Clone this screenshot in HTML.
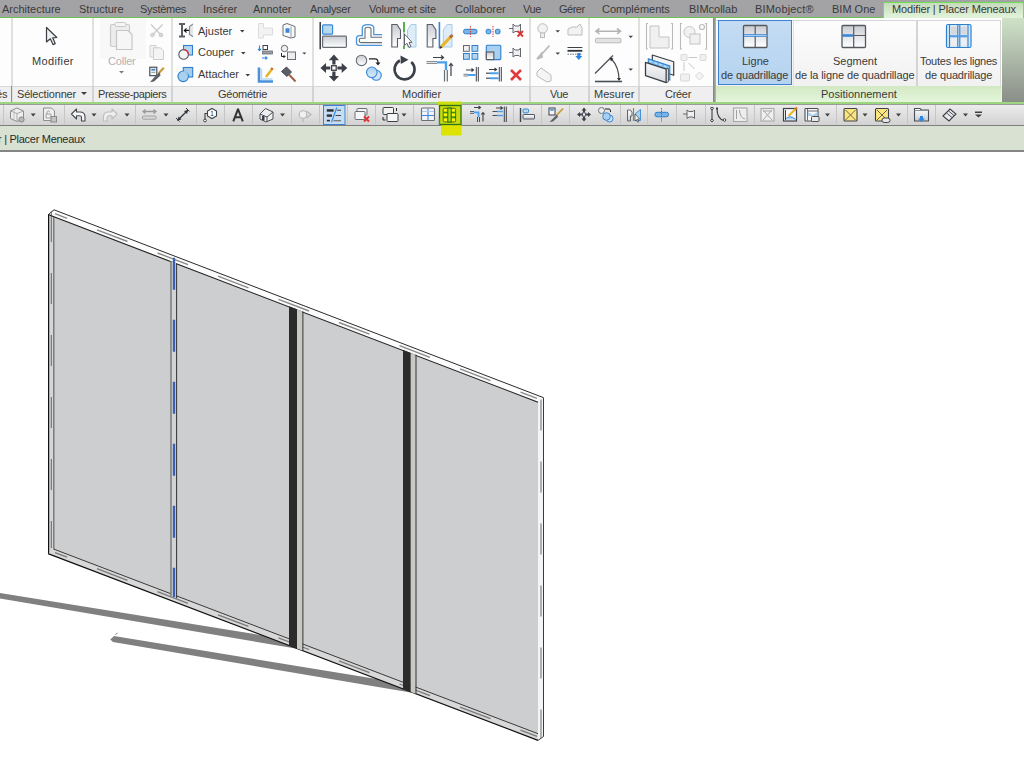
<!DOCTYPE html>
<html><head><meta charset="utf-8">
<style>
*{margin:0;padding:0;box-sizing:border-box}
html,body{width:1024px;height:770px;overflow:hidden;background:#fff;font-family:"Liberation Sans",sans-serif;font-size:11px;color:#333}
.a{position:absolute}
.t{position:absolute;white-space:nowrap;line-height:13px;font-size:11px;color:#3a3a3a}
.g{color:#b4b0b6}
#tabs{left:0;top:0;width:1024px;height:17px;background:#a3a3a6}
#gline{left:0;top:17px;width:1024px;height:1px;background:#6cc24a}
#ribbon{left:0;top:18px;width:1024px;height:68px;background:#fdfdfd}
#labels{left:0;top:86px;width:1024px;height:16px;background:#efefef;border-top:1px solid #d9d9d9}
#gline2{left:0;top:102px;width:1024px;height:2px;background:#9cd67e}
#qat{left:0;top:104px;width:1024px;height:22px;background:linear-gradient(#ececec,#d2d2d2);border-top:1px solid #9a9a9a;border-bottom:1px solid #7e7e7e}
#opts{left:0;top:126px;width:1024px;height:24px;background:#d9e2d2}
#optline{left:0;top:150px;width:1024px;height:2px;background:#858585}
.sep{position:absolute;top:18px;width:2px;height:84px;background:#dde3da}
.qs{position:absolute;top:105px;width:2px;height:19px;border-left:1px solid #c4c4c4;border-right:1px solid #f6f6f6}
</style></head><body>
<svg class="a" style="left:0;top:0" width="1024" height="770" viewBox="0 0 1024 770">
<polygon fill="#808080" points="0.0,592.9 300.0,641.4 300.0,649.2 0.0,598.6"/>
<polygon fill="#808080" points="114.0,636.1 415.0,685.2 415.0,693.2 113.0,642.0 110.3,639.6"/>
<line x1="115.5" y1="634.8" x2="117.5" y2="632.8" stroke="#555" stroke-width="0.8"/>
<polygon fill="#fcfcfc" points="54.0,210.0 543.6,397.7 538.0,401.6 48.0,214.0"/>
<path d="M48.5,214.5 L54,209.8 L543.6,397.7" fill="none" stroke="#2a2a2a" stroke-width="1"/>
<line x1="55.0" y1="213.7" x2="67.0" y2="218.3" stroke="#8a8a8a" stroke-width="1.4"/>
<line x1="97.0" y1="229.8" x2="127.5" y2="241.5" stroke="#8a8a8a" stroke-width="1.4"/>
<line x1="157.5" y1="253.0" x2="188.0" y2="264.7" stroke="#8a8a8a" stroke-width="1.4"/>
<line x1="218.0" y1="276.2" x2="248.5" y2="287.9" stroke="#8a8a8a" stroke-width="1.4"/>
<line x1="278.5" y1="299.4" x2="309.0" y2="311.0" stroke="#8a8a8a" stroke-width="1.4"/>
<line x1="339.0" y1="322.5" x2="369.5" y2="334.2" stroke="#8a8a8a" stroke-width="1.4"/>
<line x1="399.5" y1="345.7" x2="430.0" y2="357.4" stroke="#8a8a8a" stroke-width="1.4"/>
<line x1="460.0" y1="368.9" x2="490.5" y2="380.6" stroke="#8a8a8a" stroke-width="1.4"/>
<line x1="520.5" y1="392.1" x2="537.0" y2="398.4" stroke="#8a8a8a" stroke-width="1.4"/>
<polygon fill="#f4f6f6" points="538.0,401.6 543.6,397.7 543.6,736.5 538.0,740.4"/>
<path d="M543.5,397.7 V736.5 L538,740.4" fill="none" stroke="#3a3a3a" stroke-width="1"/>
<line x1="541" y1="399.4" x2="541" y2="738" stroke="#8c8c8c" stroke-width="1.3" stroke-dasharray="31 31"/>
<polygon fill="#cdced0" points="48.0,214.0 538.0,401.6 538.0,740.4 48.0,553.6"/>
<polygon fill="#d6d6d6" points="48.0,214.0 54.6,216.5 54.6,556.1 48.0,553.6"/>
<line x1="48.6" y1="214" x2="48.6" y2="554" stroke="#111" stroke-width="1.2"/>
<line x1="53.8" y1="217" x2="53.8" y2="551" stroke="#6e6e6e" stroke-width="1.3"/>
<line x1="51.3" y1="211" x2="51.3" y2="548" stroke="#666" stroke-width="1" stroke-dasharray="31 31"/>
<polygon fill="#d8d8d8" points="54.0,549.2 538.0,733.7 538.0,740.4 48.0,553.6"/>
<line x1="54" y1="549.2" x2="538" y2="733.7" stroke="#3a3a3a" stroke-width="1"/>
<line x1="55.0" y1="552.7" x2="67.0" y2="557.2" stroke="#7a7a7a" stroke-width="1.3"/>
<line x1="97.0" y1="568.7" x2="127.5" y2="580.3" stroke="#7a7a7a" stroke-width="1.3"/>
<line x1="157.5" y1="591.7" x2="188.0" y2="603.4" stroke="#7a7a7a" stroke-width="1.3"/>
<line x1="218.0" y1="614.8" x2="248.5" y2="626.4" stroke="#7a7a7a" stroke-width="1.3"/>
<line x1="278.5" y1="637.9" x2="309.0" y2="649.5" stroke="#7a7a7a" stroke-width="1.3"/>
<line x1="339.0" y1="660.9" x2="369.5" y2="672.6" stroke="#7a7a7a" stroke-width="1.3"/>
<line x1="399.5" y1="684.0" x2="430.0" y2="695.6" stroke="#7a7a7a" stroke-width="1.3"/>
<line x1="460.0" y1="707.1" x2="490.5" y2="718.7" stroke="#7a7a7a" stroke-width="1.3"/>
<line x1="520.5" y1="730.1" x2="537.0" y2="736.4" stroke="#7a7a7a" stroke-width="1.3"/>
<line x1="48" y1="553.6" x2="538" y2="740.4" stroke="#111" stroke-width="1.2"/>
<line x1="48" y1="214.6" x2="538" y2="402.2" stroke="#222" stroke-width="1.1"/>
<polygon fill="#2b2b2b" points="289.0,306.3 297.0,309.3 297.0,648.5 289.0,645.5"/>
<polygon fill="#c8c9c3" points="297.0,309.3 302.4,311.4 302.4,650.6 297.0,648.5"/>
<line x1="302.9" y1="311.4" x2="302.9" y2="650.6" stroke="#333" stroke-width="1"/>
<polygon fill="#2b2b2b" points="403.0,349.9 410.8,352.9 410.8,691.9 403.0,688.9"/>
<polygon fill="#c8c9c3" points="410.8,352.9 415.5,354.7 415.5,693.7 410.8,691.9"/>
<line x1="416.0" y1="354.7" x2="416.0" y2="693.7" stroke="#333" stroke-width="1"/>
<polygon fill="#d2d3d4" points="170.6,260.9 176.6,263.2 176.6,598.3 170.6,596.0"/>
<line x1="171" y1="261.1" x2="171" y2="596.2" stroke="#666" stroke-width="1.2"/>
<line x1="176.6" y1="263.2" x2="176.6" y2="598.3" stroke="#333" stroke-width="1"/>
<line x1="174" y1="257.8" x2="174" y2="597.3" stroke="#3a5fb0" stroke-width="2.3" stroke-dasharray="32 30"/>
</svg>
<div id="tabs" class="a"></div>
<div id="gline" class="a"></div>
<div id="ribbon" class="a"></div>
<div id="labels" class="a"></div>
<!-- Positionnement panel area -->
<div class="a" style="left:716px;top:18px;width:286px;height:68px;background:#fff"></div>
<div class="a" style="left:716px;top:20px;width:285px;height:66px;background:linear-gradient(#fdfdfd,#f1f1f1);border-top:1px solid #d6d6d6;border-right:1px solid #d6d6d6"></div>
<div class="a" style="left:713px;top:18px;width:3px;height:84px;background:linear-gradient(90deg,#7a7e7a,#b4bcb0)"></div>
<div class="a" style="left:716px;top:86px;width:285px;height:16px;background:linear-gradient(#d2e9c4,#e4f5da)"></div>
<div class="a" style="left:1002px;top:18px;width:22px;height:84px;background:linear-gradient(#cfe2c8,#8a8e88)"></div>
<div id="gline2" class="a"></div>
<div id="qat" class="a"></div>
<div id="opts" class="a"></div>
<div id="optline" class="a"></div>
<div class="a" style="left:883px;top:2px;width:141px;height:16px;border:1px solid #6fe04e;border-bottom:none;border-radius:2px 2px 0 0;background:linear-gradient(#c6dbbe,#e2f5da)"></div>
<div class="sep" style="left:11px"></div>
<div class="sep" style="left:92px"></div>
<div class="sep" style="left:171px"></div>
<div class="sep" style="left:312px"></div>
<div class="sep" style="left:529px"></div>
<div class="sep" style="left:588px"></div>
<div class="sep" style="left:638px"></div>
<div class="sep" style="left:793px;top:21px;height:65px;background:#e2e2e2;width:1px"></div>
<div class="sep" style="left:916px;top:21px;height:65px;background:#d4d4d4;width:2px"></div>
<div class="a" style="left:11px;top:86px;width:1px;height:16px;background:#8e8e8e"></div>
<div class="a" style="left:92px;top:86px;width:2px;height:16px;background:#d2d2d2"></div>
<div class="a" style="left:171px;top:86px;width:2px;height:16px;background:#d2d2d2"></div>
<div class="a" style="left:312px;top:86px;width:2px;height:16px;background:#d2d2d2"></div>
<div class="a" style="left:529px;top:86px;width:2px;height:16px;background:#d2d2d2"></div>
<div class="a" style="left:588px;top:86px;width:2px;height:16px;background:#d2d2d2"></div>
<div class="a" style="left:638px;top:86px;width:2px;height:16px;background:#d2d2d2"></div>
<div class="a" style="left:100px;top:18px;width:46px;height:41px;background:#f8f8f8"></div>
<svg class="a" style="left:0;top:0" width="1024" height="104" viewBox="0 0 1024 104">
<defs>
<linearGradient id="gg" x1="0" y1="0" x2="0" y2="1"><stop offset="0" stop-color="#c9ccd2"/><stop offset="1" stop-color="#ffffff"/></linearGradient>
<linearGradient id="gb" x1="0" y1="0" x2="0" y2="1"><stop offset="0" stop-color="#a9d0ee"/><stop offset="1" stop-color="#d8ecfa"/></linearGradient>
<linearGradient id="gcw" x1="0" y1="0" x2="0" y2="1"><stop offset="0" stop-color="#f8f9fa"/><stop offset="1" stop-color="#d6d9de"/></linearGradient>
<linearGradient id="gbtn" x1="0" y1="0" x2="0" y2="1"><stop offset="0" stop-color="#c4dcf3"/><stop offset="1" stop-color="#b5d3f0"/></linearGradient>
</defs>
<!-- Selectionner: cursor -->
<path d="M46.5,27.5 L46.5,42 L50.3,38.8 L53,44.6 L55.2,43.6 L52.7,37.8 L56.8,37.5 Z" fill="#eef0f3" stroke="#3a3d44" stroke-width="1.2" stroke-linejoin="round"/>
<!-- Coller: clipboard (greyed) -->
<rect x="110.5" y="24.5" width="19" height="22" rx="1.5" fill="#ececec" stroke="#cbcbcb" stroke-width="1.2"/>
<rect x="115" y="22.5" width="11" height="4" rx="1.5" fill="#f5f5f5" stroke="#c8c8c8"/>
<path d="M116.5,30.5 H128 L132,34.5 V49.5 H116.5 Z" fill="#f6f6f6" stroke="#c6c6c6" stroke-width="1.2"/>
<path d="M119,71 h5 l-2.5,2.5z" fill="#7a7a7a"/>
<!-- scissors greyed -->
<path d="M151,24.5 L162,36 M162.5,24.5 L151.5,36" stroke="#cfcfcf" stroke-width="1.6"/>
<circle cx="152.5" cy="35" r="1.8" fill="none" stroke="#c8c8c8"/><circle cx="161" cy="35" r="1.8" fill="none" stroke="#c8c8c8"/>
<!-- copy greyed -->
<path d="M150,45.5 h6 v11.5 h-6z" fill="#f2f2f2" stroke="#d2d2d2"/>
<path d="M153.5,47.8 h7 l3,3 v8.7 h-10z" fill="#f4f4f4" stroke="#cdcdcd"/>
<!-- match props -->
<rect x="149.8" y="67.2" width="7" height="8.5" fill="#f4f6f8" stroke="#3c4048" stroke-width="1.1"/>
<rect x="151.3" y="68.8" width="4" height="1.8" fill="#3a86d6"/>
<rect x="151.3" y="71.8" width="4" height="1.2" fill="#9aa"/>
<path d="M163.8,67.8 L158.5,73.5" stroke="#c8a040" stroke-width="2.4"/>
<path d="M159.5,72 L154.5,77 L150,82.3 L154,81.5 L160.5,75.5 Z" fill="#5c6068"/>
<!-- Geometrie: Ajuster -->
<path d="M179,24 h6 M179,36.5 h6 M182,24 v12.5" stroke="#5b5f66" stroke-width="2"/>
<path d="M191,30.4 H184.5 M186.5,28.3 L184.3,30.4 L186.5,32.5" stroke="#111" stroke-width="1.1" fill="none"/>
<path d="M193,24 L189.5,26.5 V34.5 L193,36.8" stroke="#8a8e95" stroke-width="1.2" fill="#e4e7ea"/>
<path d="M240,30 h4.5 l-2.25,2.5z" fill="#404040"/>
<!-- Couper -->
<rect x="183.5" y="45.5" width="9" height="9.5" fill="#b4d6ee" stroke="#2f7fcf" stroke-width="1.1"/>
<circle cx="183.6" cy="54.4" r="4.8" fill="#f4f4f4" stroke="#555a62" stroke-width="1.1"/>
<path d="M183.6,49.6 A4.8,4.8 0 0 1 188.4,54.4" stroke="#e03030" stroke-width="1.2" fill="none"/>
<path d="M241,52 h4.5 l-2.25,2.5z" fill="#404040"/>
<!-- Attacher -->
<rect x="183.3" y="67.5" width="9.4" height="9.5" fill="#a6cde9" stroke="#2f7fcf" stroke-width="1.1"/>
<circle cx="183.2" cy="76.3" r="5.3" fill="#a9d0ec" stroke="#2f7fcf" stroke-width="1.1"/>
<path d="M183.3,71 h4.4 v5.3" fill="#a0c8e6"/>
<path d="M245.5,74 h4.5 l-2.25,2.5z" fill="#404040"/>
<!-- small geometry icons -->
<path d="M258.5,23.5 h5 v4.5 h9 v7 h-9 v3 h-5z" fill="#f2f2f2" stroke="#dcdcdc"/>
<path d="M283,25 L287,23.5 L295,26.5 V37 L291,38 L283,35.5Z" fill="#f8f9fa" stroke="#6a6e75" stroke-width="1"/>
<path d="M291,26.5 V38" stroke="#9a9ea5"/>
<rect x="285.5" y="28.3" width="4" height="4.5" fill="#3a86d6"/>
<path d="M259.5,45.5 v5 M258,49 l1.5,1.5 l1.5,-1.5" stroke="#2f86e0" stroke-width="1.1" fill="none"/>
<rect x="263" y="45.5" width="4.5" height="4" fill="#fff" stroke="#3c4048"/>
<rect x="262.5" y="51" width="10" height="3" fill="#9a9da2" stroke="#6a6e75" stroke-width="0.8"/>
<path d="M262,58 h5 M265.5,56.5 l1.5,1.5 l-1.5,1.5" stroke="#2f86e0" stroke-width="1.1" fill="none"/>
<circle cx="284.5" cy="48.5" r="3.2" fill="#f0f0f0" stroke="#666a70"/>
<rect x="287.5" y="52" width="8" height="7.5" fill="#eceef0" stroke="#6a6e75"/>
<path d="M281.5,53 v3.5 h3.5 M283.5,55 l1.5,1.5 l-1.5,1.5" stroke="#222" stroke-width="1" fill="none"/>
<path d="M302.3,52.4 h4 l-2,2z" fill="#404040"/>
<path d="M259,67.5 v14 h14" stroke="#4a90da" stroke-width="2.6" fill="none"/>
<path d="M261.5,69 v10 h11" stroke="#b8d8f2" stroke-width="1.4" fill="none"/>
<path d="M266,77 L272,69" stroke="#e6b020" stroke-width="2.4"/>
<path d="M271,68 L273,69.5" stroke="#c86a2a" stroke-width="2"/>
<path d="M281.5,71.5 L286.5,67 L291.5,72 L287,76.5 Z" fill="#5a6068" stroke="#3c4048" stroke-width="0.9"/>
<path d="M289,74.5 L295.5,81.5" stroke="#a0604a" stroke-width="2"/>
<!-- Modifier panel large icons -->
<path d="M320.2,22 V49.3" stroke="#2a2d33" stroke-width="1.4"/>
<rect x="322.6" y="24.8" width="10" height="9.4" rx="1" fill="#b8d8ec" stroke="#3a8ad8" stroke-width="1.2"/>
<rect x="322.6" y="36.2" width="23.8" height="11.2" rx="0.8" fill="url(#gg)" stroke="#686c73" stroke-width="1.2"/>
<path d="M382,45.3 H359 Q356.5,45.3 356.5,42.8 V38.5 Q356.5,35.6 359.5,35.6 H362.3 V28 Q362.3,24.6 368,24.6 Q373.8,24.6 373.8,28 V34.6 H382" fill="none" stroke="#4a92da" stroke-width="1.3"/>
<path d="M382,42.6 H361 Q359.3,42.6 359.3,41 V39.6 Q359.3,38.3 361,38.3 H365 V29 Q365,27.3 368,27.3 Q371,27.3 371,29 V37.2 H382" fill="none" stroke="#6a6e75" stroke-width="1.1"/>
<!-- mirror pick -->
<path d="M391.8,24.5 H397 L400.5,30 V38.5 H397.5 V47 H391.8 Z" fill="url(#gg)" stroke="#5a5e66" stroke-width="1.1"/>
<path d="M404,22 V32.5 M404,46 V49" stroke="#44a840" stroke-width="1.8"/><path d="M404,33 V46" stroke="#9a9ea4" stroke-width="1.2"/>
<path d="M416,24.5 H411 L407.5,30 V38.5 V47 H416 Z" fill="#dcecf8" stroke="#a8cbe8" stroke-width="1"/>
<path d="M404.5,34 V45.5 L407,43.3 L409,47.5 L411,46.5 L409,42.5 L412,42.3 Z" fill="#fff" stroke="#50545c" stroke-width="0.9"/>
<!-- mirror draw -->
<path d="M427.2,24.5 H432.4 L435.9,30 V38.5 H432.9 V47 H427.2 Z" fill="url(#gg)" stroke="#5a5e66" stroke-width="1.1"/>
<path d="M439.4,22 V48" stroke="#2f86e0" stroke-width="1.6"/>
<path d="M452,24.5 H447 L443.3,30 V47 H452 Z" fill="#dcecf8" stroke="#a8cbe8" stroke-width="1"/>
<path d="M441,47 L451,36.5" stroke="#e8b428" stroke-width="3.2"/>
<path d="M450,37.5 L452.5,35" stroke="#b86a30" stroke-width="3"/>
<path d="M439.3,49 L440.5,45.8 L442.5,47.7 Z" fill="#333"/>
<!-- move -->
<g fill="#3c4048">
<path d="M333.9,54.6 L328.8,60.2 H332.3 V64.5 H335.5 V60.2 H339 Z"/>
<path d="M333.9,81.5 L328.8,75.9 H332.3 V71.6 H335.5 V75.9 H339 Z"/>
<path d="M320.4,68 L326,62.9 V66.4 H330.3 V69.6 H326 V73.1 Z"/>
<path d="M347.3,68 L341.7,62.9 V66.4 H337.4 V69.6 H341.7 V73.1 Z"/>
</g>
<rect x="331.6" y="65.7" width="4.6" height="4.6" fill="#fff" stroke="#3c4048" stroke-width="1.3"/>
<!-- copy -->
<circle cx="361.5" cy="60.4" r="5.2" fill="url(#gg)" stroke="#6a6e75" stroke-width="1.1"/>
<path d="M369,58.8 H375 Q378,58.8 378,62 V63" fill="none" stroke="#222" stroke-width="1.2"/>
<path d="M375.5,62.5 L378,65.5 L380.5,62.5 Z" fill="#222"/>
<circle cx="376.3" cy="75.3" r="5" fill="#cfe5f5" stroke="#3a86d6" stroke-width="1.1"/>
<circle cx="371.8" cy="72.3" r="5.3" fill="url(#gb)" stroke="#3a86d6" stroke-width="1.1"/>
<!-- rotate -->
<path d="M411.3,62 A10,10 0 1 1 400,60.5" fill="none" stroke="#3c4048" stroke-width="2.6"/>
<path d="M400.5,55.5 L408.5,59.8 L400.8,64 Z" fill="#3c4048"/>
<!-- trim extend -->
<path d="M433,57.5 H443 M441,55.5 L443.5,57.5 L441,59.5" fill="none" stroke="#3c4048" stroke-width="1.2"/>
<path d="M426.5,61.5 H437 M426.5,63.3 H437" stroke="#8a8e95" stroke-width="1.2"/>
<path d="M437,62.4 H446 V70" stroke="#4aa0ec" stroke-width="2.4" fill="none"/>
<path d="M444.5,70 V81.5 M447.3,70 V81.5" stroke="#6a6e75" stroke-width="1.2"/>
<path d="M451,76 V64 M449,66 L451,63.5 L453,66" fill="none" stroke="#3c4048" stroke-width="1.2"/>
<!-- small modifier icons -->
<rect x="463.5" y="29.3" width="13.5" height="4.5" rx="2" fill="#7ab4e4" stroke="#2f7fcf" stroke-width="1"/>
<path d="M470.4,26 V37" stroke="#e03a3a" stroke-width="1" stroke-dasharray="1.5 1"/>
<rect x="486.2" y="29.3" width="4.6" height="4.5" rx="1.5" fill="#7ab4e4" stroke="#2f7fcf" stroke-width="1"/>
<rect x="495.4" y="29.3" width="4.6" height="4.5" rx="1.5" fill="#7ab4e4" stroke="#2f7fcf" stroke-width="1"/>
<path d="M493,26 V37" stroke="#e03a3a" stroke-width="1" stroke-dasharray="1.5 1"/>
<path d="M509,28.5 H513 M513,24 L515,26 H519 L520.5,24 V33 L519,31.5 H515 L513,33Z" fill="#f0f0f0" stroke="#555a62" stroke-width="0.9"/>
<path d="M517.5,31 L523,36.5 M523,31 L517.5,36.5" stroke="#e03030" stroke-width="1.8"/>
<rect x="463.5" y="45.5" width="5.8" height="5.8" fill="#f0f0f0" stroke="#666a70"/>
<rect x="472" y="45.5" width="5.8" height="5.8" fill="#b4d6ee" stroke="#2f7fcf"/>
<rect x="463.5" y="53.5" width="5.8" height="5.8" fill="#b4d6ee" stroke="#2f7fcf"/>
<rect x="472" y="53.5" width="5.8" height="5.8" fill="#b4d6ee" stroke="#2f7fcf"/>
<rect x="486.3" y="45.3" width="14.5" height="14.3" rx="1" fill="#a9d0ee" stroke="#2f7fcf" stroke-width="1.1"/>
<rect x="486.3" y="52" width="7.5" height="7.6" fill="url(#gg)" stroke="#55595f" stroke-width="1.1"/>
<path d="M509,52.5 H513 M513,48 L515,50 H519 L520.5,48 V57 L519,55.5 H515 L513,57Z" fill="#f0f0f0" stroke="#555a62" stroke-width="0.9"/>
<path d="M466,70 H473 M471.5,68.5 L473.5,70 L471.5,71.5" stroke="#3c4048" stroke-width="1.1" fill="none"/>
<path d="M463.5,74.3 H468 M463.5,76 H468" stroke="#6a6e75" stroke-width="0.9"/>
<path d="M468,75 H475.5" stroke="#4aa0ec" stroke-width="2"/>
<path d="M476.3,67 V81.5 M478.3,67 V81.5" stroke="#3c4048" stroke-width="1"/>
<path d="M489,69.5 H496 M494.5,68 L496.5,69.5 L494.5,71" stroke="#3c4048" stroke-width="1.1" fill="none"/>
<path d="M486,73.3 H490 M486,78.3 H490" stroke="#6a6e75" stroke-width="1.6"/>
<path d="M490,73.3 H498.5 M490,78.3 H498.5" stroke="#4aa0ec" stroke-width="2"/>
<path d="M499.3,67 V81.5 M501.3,67 V81.5" stroke="#3c4048" stroke-width="1"/>
<path d="M511,70 L521,80 M521,70 L511,80" stroke="#e23a3a" stroke-width="2.6"/>
<!-- Vue panel (greyed) -->
<circle cx="542.6" cy="28.5" r="4.8" fill="#f2f2f2" stroke="#bcbcbc"/>
<rect x="540.5" y="33" width="4" height="4.5" fill="#eee" stroke="#bcbcbc"/>
<path d="M555.5,30.2 h4.5 l-2.25,2.2z" fill="#404040"/>
<path d="M568,29 L572,27 H577 L580,24 L582,28 V35 H568Z" fill="#f2f2f2" stroke="#bdbdbd"/>
<path d="M549.5,45.5 L541,55 M541.5,53.5 L537,59 L542,57 Z" stroke="#bababa" stroke-width="1.8" fill="#b4b4b4"/>
<path d="M555.5,52.5 h4.5 l-2.25,2.2z" fill="#404040"/>
<path d="M567.5,47.5 H582.3" stroke="#3c4048" stroke-width="1"/>
<path d="M567.5,50.8 H582.3" stroke="#2e323a" stroke-width="1.8"/>
<path d="M567.5,54.2 H582.3" stroke="#6a6e75" stroke-width="1" stroke-dasharray="1.5 1"/>
<path d="M577.3,53 h3 v3 h2 l-3.5,4 l-3.5,-4 h2z" fill="#2f86e0"/>
<path d="M537,72 L541,68 L551,75 V81 L547,82 L537,76Z" fill="#f4f4f4" stroke="#bcbcbc"/>
<!-- Mesurer -->
<path d="M596,31.2 H620.5 M599.5,28.5 L596,31.2 L599.5,34 M617,28.5 L620.5,31.2 L617,34" stroke="#b4b4b4" stroke-width="1.6" fill="none"/>
<rect x="595.5" y="38.3" width="25.5" height="4.5" rx="1" fill="#e2e2e2" stroke="#bababa"/>
<path d="M628.5,35.8 h4.5 l-2.25,2.2z" fill="#404040"/>
<path d="M595,81.5 H622" stroke="#4a4e55" stroke-width="1.6"/>
<path d="M595,73.5 L613,55.5" stroke="#4a4e55" stroke-width="1.2"/>
<path d="M611.5,59 Q619,67 619,80" fill="none" stroke="#4a4e55" stroke-width="1.2"/>
<path d="M609.5,57.5 L613.5,58.5 L611,61.5Z M617,78 H621 L619,81Z" fill="#333"/>
<path d="M628.5,68.5 h4.5 l-2.25,2.2z" fill="#404040"/>
<!-- Creer greyed -->
<path d="M648,23.5 H646.5 V49 H648 M671,23.5 H672.5 V49 H671" stroke="#bababa" stroke-width="1.1" fill="none"/>
<path d="M650,26 h9 v11 h10 v11 h-19z" fill="#f0f0f0" stroke="#c4c4c4"/>
<path d="M682,23.5 H680.5 V49 H682 M705,23.5 H706.5 V49 H705" stroke="#bababa" stroke-width="1.1" fill="none"/>
<circle cx="689.5" cy="32" r="5.5" fill="#f2f2f2" stroke="#c4c4c4"/>
<rect x="690" y="34" width="10" height="10" fill="#f0f0f0" stroke="#c4c4c4"/>
<circle cx="702" cy="27" r="2.5" fill="none" stroke="#bcbcbc" stroke-width="1.2"/>
<!-- curtain wall icon -->
<path d="M652.3,55 L673.7,61.8 V75.3 L652.3,68.5 Z" fill="#f2f3f5" stroke="#3a3e45" stroke-width="1.2" stroke-linejoin="round"/>
<path d="M648.3,58.8 L669.8,66 V80 L648.3,72.8 Z" fill="#7ab8ec" stroke="#2f7fcf" stroke-width="1.1"/>
<path d="M649.5,61 L669,67.6" stroke="#bfe0f8" stroke-width="1.4" stroke-dasharray="3 2"/>
<path d="M645.5,62.3 L666.3,69.2 V82.6 L645.5,75.6 Z" fill="url(#gcw)" stroke="#3a3e45" stroke-width="1.3" stroke-linejoin="round"/>
<path d="M666.3,69.2 L668.3,68.3 V81.7 L666.3,82.6Z" fill="#fff" stroke="#3a3e45" stroke-width="0.9"/>
<!-- flow greyed -->
<rect x="681" y="54.5" width="6" height="6" rx="1" fill="#f0f0f0" stroke="#d8d8d8"/>
<rect x="700" y="54.5" width="6" height="6" rx="1" fill="#f0f0f0" stroke="#d8d8d8"/>
<rect x="680.5" y="74" width="9" height="7" rx="1" fill="#f0f0f0" stroke="#d8d8d8"/>
<path d="M699.5,72 L703.5,76 L699.5,80 L695.5,76Z" fill="#f4f4f4" stroke="#d8d8d8"/>
<path d="M688.5,57.5 H697 M684,62 V71 M688.5,63 L694.5,69" stroke="#c8c8c8" stroke-width="1"/>
<!-- Positionnement selected button -->
<rect x="718.5" y="20.5" width="73" height="64" fill="url(#gbtn)" stroke="#3c82d0" stroke-width="1"/>
<rect x="743.5" y="25.5" width="23.5" height="22" rx="1" fill="url(#gg)" stroke="#55595f" stroke-width="1.3"/>
<path d="M755.2,25.5 V47.5" stroke="#55595f" stroke-width="1.2"/>
<path d="M744,35.5 H766.5" stroke="#3a86d6" stroke-width="2.6"/>
<path d="M744,35.5 H766.5" stroke="#bfe0fa" stroke-width="0.8"/>
<rect x="842" y="25.5" width="23.5" height="22" rx="1" fill="url(#gg)" stroke="#55595f" stroke-width="1.3"/>
<path d="M853.7,25.5 V47.5 M842.5,35.5 H865" stroke="#55595f" stroke-width="1.2"/>
<path d="M842.5,35.5 H853.5" stroke="#3a86d6" stroke-width="2.6"/>
<rect x="946.5" y="24.5" width="24.5" height="23" rx="1.5" fill="#d8e8f6" stroke="#2f7fcf" stroke-width="1.2"/>
<rect x="951" y="27" width="6" height="7.5" fill="#d6d8dc"/><rect x="960.5" y="27" width="6" height="7.5" fill="#d6d8dc"/>
<rect x="951" y="38" width="6" height="7.5" fill="#eceef0"/><rect x="960.5" y="38" width="6" height="7.5" fill="#eceef0"/>
<path d="M949.5,24.5 V47.5 M968,24.5 V47.5 M957.8,24.5 V47.5 M959.8,24.5 V47.5" stroke="#2f7fcf" stroke-width="1.1"/>
<path d="M950,36.2 H967.5" stroke="#5aa0e0" stroke-width="2.2"/>
</svg>

<svg class="a" style="left:0;top:100px" width="1024" height="40" viewBox="0 100 1024 40">
<defs>
<linearGradient id="qg" x1="0" y1="0" x2="0" y2="1"><stop offset="0" stop-color="#ffffff"/><stop offset="1" stop-color="#c8ccd2"/></linearGradient>
</defs>
<g stroke="#c6c6c6" stroke-width="1">
<path d="M3.5,105 V124 M64.5,105 V124 M135.5,105 V124 M196.5,105 V124 M224.5,105 V124 M252.5,105 V124 M291.5,105 V124 M319.5,105 V124 M375.5,105 V124 M413.5,105 V124 M347.5,105 V124 M513.5,105 V124 M541.5,105 V124 M569.5,105 V124 M620.5,105 V124 M647.5,105 V124 M676.5,105 V124 M705.5,105 V124 M754.5,105 V124 M836.5,105 V124 M907.5,105 V124 M935.5,105 V124"/>
</g>
<g fill="#3e3e3e">
<path d="M30.7,113.5 h5 l-2.5,3z"/><path d="M91.5,113.5 h5 l-2.5,3z"/><path d="M124.5,113.5 h5 l-2.5,3z"/><path d="M163.5,113.5 h5 l-2.5,3z"/>
<path d="M280.0,113.5 h5 l-2.5,3z"/><path d="M401.5,113.5 h5 l-2.5,3z"/><path d="M825.0,113.5 h5 l-2.5,3z"/><path d="M862.5,113.5 h5 l-2.5,3z"/><path d="M896.0,113.5 h5 l-2.5,3z"/><path d="M963.0,113.5 h5 l-2.5,3z"/>
<path d="M975,111.5 h7 v1.5 h-7z"/><path d="M975,114.5 h7 l-3.5,3z"/>
</g>
<!-- 3D cube grey -->
<path d="M10.5,111 L17,108 L23.5,111 V118.5 L17,121.5 L10.5,118.5Z" fill="#eeeeee" stroke="#8c8c8c"/>
<path d="M10.5,111 L17,113.5 L23.5,111 M17,113.5 V121.5" stroke="#a8a8a8" fill="none"/>
<path d="M14,109.5 V119.5" stroke="#c0c0c0"/>
<circle cx="21.5" cy="119.5" r="2.6" fill="#b8b8b8" stroke="#8a8a8a"/>
<!-- doc grey -->
<path d="M43.5,108 h8 l3,3 v9.5 h-11z" fill="#efefef" stroke="#8e8e8e"/>
<path d="M46,114 h5 v4 h-5z M47,114 v-2 q1.5,-2 3,0" fill="none" stroke="#9a9a9a" stroke-width="0.9"/>
<rect x="51" y="116.5" width="5.5" height="5.5" fill="#c4c4c4" stroke="#8a8a8a"/>
<!-- undo -->
<path d="M71.5,114 L76.5,109 V112 H80 Q85,112 85,117 V121 H81.5 V117.5 Q81.5,115.8 79.5,115.8 H76.5 V119 Z" fill="#f6f7f9" stroke="#45494f" stroke-width="1.1" stroke-linejoin="round"/>
<!-- redo grey -->
<path d="M117,114 L112,109 V112 H108.5 Q103.5,112 103.5,117 V121 H107 V117.5 Q107,115.8 109,115.8 H112 V119 Z" fill="#f0f0f0" stroke="#bdbdbd" stroke-width="1.1" stroke-linejoin="round"/>
<!-- dim -->
<path d="M143,111.5 H156 M145.5,109.5 L143,111.5 L145.5,113.5 M153.5,109.5 L156,111.5 L153.5,113.5" stroke="#9a9a9a" stroke-width="1.3" fill="none"/>
<rect x="142.5" y="116" width="13.5" height="3.2" rx="1" fill="#d8d8d8" stroke="#a0a0a0"/>
<!-- aligned dim -->
<path d="M177.5,120.5 L188,110" stroke="#2e323a" stroke-width="1.2"/>
<path d="M176,118 L179.5,121.5 M186,108 L189.5,111.5" stroke="#2e323a" stroke-width="1"/>
<path d="M177.5,120.5 l1,-4 l3,3z M188,110 l-4,1 l3,3z" fill="#2e323a"/>
<!-- tag -->
<path d="M205,121 V113.5 H208" stroke="#3c4048" fill="none" stroke-width="1.1"/>
<circle cx="205" cy="120.5" r="1.4" fill="#fff" stroke="#3c4048"/>
<path d="M212,108.5 L216.5,111 V116 L212,118.5 L207.5,116 V111Z" fill="#fff" stroke="#3c4048" stroke-width="1.1"/>
<text x="212" y="116" font-size="6.5" text-anchor="middle" fill="#222" font-family="Liberation Sans">1</text>
<!-- A -->
<path d="M233.3,121.3 L238,109.2 L242.8,121.3 M235,117.2 H241" fill="none" stroke="#333" stroke-width="2" stroke-linejoin="round"/>
<!-- house -->
<path d="M260,114 L265.5,108.5 L273,112 V119 L266,122 L260,119Z" fill="#eceef0" stroke="#4a4e55" stroke-width="1"/>
<path d="M260,114 L267,117 L273,112 M267,117 V122" stroke="#4a4e55" fill="none"/>
<rect x="262" y="116" width="2.5" height="4.5" fill="#3c4048"/>
<!-- pin grey -->
<circle cx="303" cy="114.5" r="3.8" fill="#f0f0f0" stroke="#b4b4b4" stroke-width="1.1"/>
<path d="M306.5,111 L311,114.5 L306.5,118 M303,118.5 V122" stroke="#b4b4b4" fill="none" stroke-width="1.1"/>
<!-- selected properties btn -->
<rect x="323.5" y="105.5" width="21.5" height="19" fill="#c6ddf3" stroke="#3c82d0" stroke-width="1"/>
<rect x="326.8" y="109.2" width="6.8" height="2.5" fill="#2e2e2e"/>
<rect x="326.8" y="114.4" width="5.2" height="2.4" fill="#2e2e2e"/>
<rect x="326.8" y="119.8" width="3.2" height="1.6" fill="#2e2e2e"/>
<path d="M337,110.3 H341 M335.5,115.5 H341" stroke="#444" stroke-width="1.1"/>
<path d="M333.5,120.7 H341" stroke="#777" stroke-width="1.3"/>
<path d="M336.8,107.5 L331.5,122.3" stroke="#3a8ae0" stroke-width="1.2"/>
<!-- close inactive -->
<rect x="357" y="108.5" width="10" height="6.5" rx="0.8" fill="#f3f3f3" stroke="#6a6e75"/>
<rect x="355" y="111.5" width="10" height="8" rx="0.8" fill="#f7f7f7" stroke="#6a6e75"/>
<path d="M364,116.5 L369,121.5 M369,116.5 L364,121.5" stroke="#e03030" stroke-width="1.8"/>
<!-- switch windows -->
<rect x="383" y="107.5" width="10.5" height="7" rx="0.8" fill="#f3f3f3" stroke="#3c4048"/>
<rect x="387" y="113.5" width="11" height="8" rx="0.8" fill="#f7f7f7" stroke="#3c4048"/>
<path d="M383,117 v3 h2.5 M396.5,108 v3" stroke="#222" fill="none"/>
<!-- grid icon -->
<rect x="421.5" y="108" width="13" height="12.5" rx="1" fill="#f4f4f6" stroke="#6a6e75" stroke-width="1.1"/>
<path d="M428,108.5 V120 M422,115.5 H434" stroke="#3a8ae0" stroke-width="1.1"/>
<path d="M422,111.5 H434" stroke="#a8cdf0" stroke-width="1"/>
<!-- highlighted mullion button -->
<rect x="438" y="101.5" width="23.5" height="3.8" fill="#d0e000" opacity="0.9"/>
<rect x="441" y="124" width="20.5" height="11.5" fill="#dde200"/>
<rect x="439.5" y="105.5" width="21.5" height="19" fill="#c6dc10" stroke="#2a7214" stroke-width="1.3"/>
<path d="M439.4,119 V125" stroke="#2f7fd0" stroke-width="1"/>
<rect x="443.2" y="108.3" width="12.4" height="13.6" rx="1" fill="#f6f600" stroke="#4a5a10" stroke-width="0.9"/>
<path d="M443.5,112.5 H455.5" stroke="#3f8a20" stroke-width="1.6"/>
<path d="M443.5,117.3 H455.5" stroke="#1f6a10" stroke-width="1.8"/>
<path d="M444.5,117.3 H454.5" stroke="#9ad030" stroke-width="0.6"/>
<rect x="447.8" y="108" width="3.4" height="14" fill="#b8dc00" stroke="#1f6a10" stroke-width="1"/>
<!-- trim icons -->
<path d="M474,107.5 H480 M478.5,106 L480.5,107.5 L478.5,109" stroke="#3c4048" stroke-width="1.1" fill="none"/>
<path d="M470,111.5 H474 M470,113.3 H474" stroke="#4a4e55" stroke-width="0.9"/>
<path d="M474,112.4 H478.5 V117" stroke="#4aa0ec" stroke-width="1.8" fill="none"/>
<path d="M477.5,117 V122 M479.5,117 V122" stroke="#4a4e55"/>
<path d="M483,121.5 V113 M481.3,114.5 L483,112.5 L484.7,114.5" stroke="#3c4048" fill="none" stroke-width="1.1"/>
<path d="M496,108 H502 M500.5,106.5 L502.5,108 L500.5,109.5" stroke="#3c4048" stroke-width="1.1" fill="none"/>
<path d="M492.5,111.5 H497 M492.5,115.5 H497" stroke="#4a4e55" stroke-width="1.2"/>
<path d="M497,111.5 H503 M497,115.5 H503" stroke="#4aa0ec" stroke-width="1.6"/>
<path d="M504.3,106.5 V122 M506.3,106.5 V122" stroke="#3c4048"/>
<!-- align -->
<path d="M520.5,108 V122" stroke="#3c4048" stroke-width="1.4"/>
<rect x="523" y="109" width="5.5" height="3.8" rx="1" fill="#b8d8ec" stroke="#3a8ad8"/>
<rect x="523" y="114.5" width="11.5" height="4.5" rx="0.5" fill="url(#qg)" stroke="#55595f"/>
<!-- match -->
<rect x="549" y="108" width="6" height="7" fill="#f4f6f8" stroke="#3c4048"/>
<rect x="550.2" y="109.2" width="3.5" height="1.5" fill="#3a86d6"/>
<path d="M563,108.5 L556,116" stroke="#c89a3a" stroke-width="1.8"/>
<path d="M557,114.5 L553,118.5 L549.5,122 L553,121.5 L558,117Z" fill="#5c6068"/>
<!-- move small -->
<g fill="#3c4048">
<path d="M584,107.5 L581.5,110.5 H583 V112.5 H585 V110.5 H586.5Z"/>
<path d="M584,121.5 L581.5,118.5 H583 V116.5 H585 V118.5 H586.5Z"/>
<path d="M577,114.5 L580,112 V113.5 H582 V115.5 H580 V117Z"/>
<path d="M591,114.5 L588,112 V113.5 H586 V115.5 H588 V117Z"/>
</g>
<rect x="582.5" y="113" width="3" height="3" fill="#fff" stroke="#3c4048" stroke-width="0.8"/>
<!-- copy small -->
<circle cx="601.5" cy="110.5" r="3" fill="#eee" stroke="#6a6e75"/>
<path d="M605,109 H609 Q610.5,109 610.5,111 V112" stroke="#222" fill="none"/>
<circle cx="609.5" cy="118.5" r="3.5" fill="#cfe5f5" stroke="#3a86d6"/>
<circle cx="606.5" cy="116.5" r="3.8" fill="#a9d0ee" stroke="#3a86d6"/>
<!-- mirror small -->
<path d="M627.5,110 h3 l1.5,2.5 v3.5 h-1.5 v5 h-3z" fill="url(#qg)" stroke="#55595f" stroke-width="0.9"/>
<path d="M633.5,108 V121" stroke="#44a840" stroke-width="1.1"/>
<path d="M640.5,109.5 L635.5,113.5 V120.5 H640.5Z" fill="#a9d0ee" stroke="#3a86d6" stroke-width="0.9"/>
<path d="M635,114 v7 l1.5,-1.3 l1.2,2.5 l1,-0.5 l-1.2,-2.5 l2,-0.2z" fill="#fff" stroke="#333" stroke-width="0.7"/>
<!-- split small -->
<rect x="655" y="112.3" width="13.5" height="4.5" rx="2" fill="#7ab4e4" stroke="#2f7fcf"/>
<path d="M661.5,108 V121.5" stroke="#e03a3a" stroke-width="1" stroke-dasharray="1.5 1"/>
<!-- pin -->
<path d="M683,114 H687 M687,110 L689,111.5 H693 L694.5,110 V118.5 L693,117 H689 L687,118.5Z" fill="#f0f0f0" stroke="#55595f" stroke-width="0.9"/>
<!-- corner icons -->
<path d="M712,108 V120.5 M710.5,108 h3 M710.5,120.5 h3" stroke="#3c4048" stroke-width="1.1"/>
<circle cx="712" cy="108.5" r="1.2" fill="#fff" stroke="#3c4048"/><circle cx="712" cy="120.5" r="1.2" fill="#fff" stroke="#3c4048"/>
<path d="M717,108.5 Q717,119 724,120.5" fill="none" stroke="#3c4048" stroke-width="1.2"/>
<circle cx="724.5" cy="120" r="1.3" fill="#fff" stroke="#3c4048"/><rect x="716" y="107.5" width="2" height="2" fill="#3c4048"/>
<rect x="733.5" y="108" width="13.5" height="13.5" fill="#eeeeee" stroke="#a8a8a8" stroke-width="1.1"/>
<path d="M736.5,110 V119 M739.5,110 Q740,118 745,119" fill="none" stroke="#a0a0a0"/>
<rect x="761" y="108.5" width="13" height="12.5" fill="#efefef" stroke="#a8a8a8" stroke-width="1.1"/>
<path d="M763,110 L772,120 M772,110 L763,120 M763,111 H772" stroke="#a8a8a8" fill="none"/>
<rect x="783.5" y="108.5" width="13" height="12.5" fill="#f8f8f8" stroke="#3c4048" stroke-width="1.2"/>
<path d="M785,119.5 Q790,114 795.5,119.5" fill="#a9d0ee" stroke="#3a86d6"/>
<path d="M785.5,110 V120" stroke="#3c4048"/>
<path d="M788.5,116 L796,108.5" stroke="#e8b428" stroke-width="2.2"/>
<path d="M795,109.5 L797,107.5" stroke="#c8703a" stroke-width="2"/>
<!-- save-like -->
<rect x="805" y="108.5" width="13" height="12.5" rx="0.8" fill="#f7f7f7" stroke="#4a4e55" stroke-width="1.1"/>
<path d="M807.5,109 V120.5 M808,111 H817.5" stroke="#6a6e75"/>
<path d="M808,112 L812.5,115 L817.5,112 V116 H808Z" fill="#a9d0ee"/>
<rect x="811.5" y="116.5" width="7.5" height="5" rx="0.8" fill="#e8e8e8" stroke="#4a4e55"/>
<!-- yellow boxes -->
<rect x="844" y="108.5" width="13" height="12.5" rx="1" fill="#fde680" stroke="#3c4048" stroke-width="1.1"/>
<path d="M845.5,110 L855.5,120 M855.5,110 L845.5,120" stroke="#5a5a40" stroke-width="0.9"/>
<rect x="875.5" y="108.5" width="13" height="12.5" rx="1" fill="#fde680" stroke="#3c4048" stroke-width="1.1"/>
<path d="M877,110 L887,120 M887,110 L877,120" stroke="#5a5a40" stroke-width="0.9"/>
<rect x="882" y="118" width="8" height="4.5" rx="2.2" fill="#e8e8e8" stroke="#3c4048"/>
<!-- folder -->
<path d="M914.5,108.5 H920 L921.5,110 H928.5 V121 H914.5Z" fill="url(#qg)" stroke="#4a4e55" stroke-width="1.1"/>
<path d="M914.5,110.5 H928.5" stroke="#8a8e95"/>
<path d="M920,116 h3 v2.5 h2 l-3.5,3.5 l-3.5,-3.5 h2z" fill="#2f86e0"/>
<!-- link -->
<path d="M943,116 L950,109 L956,114 L949,121Z" fill="#e8eaee" stroke="#3c4048" stroke-width="1.1"/>
<path d="M946.5,113 L952,117.5 M948.5,111 L954,115.5" stroke="#3c4048" stroke-width="0.9"/>
</svg>

<div class="t" style="left:2px;top:3px">Architecture</div>
<div class="t" style="left:79px;top:3px">Structure</div>
<div class="t" style="left:140px;top:3px;letter-spacing:-0.28px">Systèmes</div>
<div class="t" style="left:203px;top:3px">Insérer</div>
<div class="t" style="left:253px;top:3px">Annoter</div>
<div class="t" style="left:310px;top:3px;letter-spacing:-0.28px">Analyser</div>
<div class="t" style="left:369px;top:3px;letter-spacing:-0.15px">Volume et site</div>
<div class="t" style="left:455px;top:3px">Collaborer</div>
<div class="t" style="left:523px;top:3px;letter-spacing:-0.4px">Vue</div>
<div class="t" style="left:559px;top:3px;letter-spacing:-0.5px">Gérer</div>
<div class="t" style="left:602px;top:3px">Compléments</div>
<div class="t" style="left:689px;top:3px">BIMcollab</div>
<div class="t" style="left:755px;top:3px;letter-spacing:0.18px">BIMobject®</div>
<div class="t" style="left:832px;top:3px">BIM One</div>
<div class="t" style="left:892px;top:3px;letter-spacing:-0.15px">Modifier | Placer Meneaux</div>

<div class="t" style="left:32px;top:55px;letter-spacing:0.34px">Modifier</div>
<div class="t g" style="left:108px;top:55px;letter-spacing:-0.2px">Coller</div>
<div class="t" style="left:198px;top:25px">Ajuster</div>
<div class="t" style="left:198px;top:46px">Couper</div>
<div class="t" style="left:198px;top:68px">Attacher</div>
<div class="t" style="left:742px;top:55px">Ligne</div>
<div class="t" style="left:721px;top:69px;letter-spacing:-0.13px">de quadrillage</div>
<div class="t" style="left:833px;top:55px">Segment</div>
<div class="t" style="left:795px;top:69px;letter-spacing:-0.11px">de la ligne de quadrillage</div>
<div class="t" style="left:920px;top:55px;letter-spacing:-0.25px">Toutes les lignes</div>
<div class="t" style="left:925px;top:69px;letter-spacing:-0.13px">de quadrillage</div>

<div class="t" style="left:-4px;top:88px">és</div>
<div class="t" style="left:17px;top:88px;letter-spacing:-0.18px">Sélectionner</div>
<div class="a" style="left:81px;top:92px;width:0;height:0;border-left:3.3px solid transparent;border-right:3.3px solid transparent;border-top:3.6px solid #404040"></div>
<div class="t" style="left:98px;top:88px;letter-spacing:-0.4px">Presse-papiers</div>
<div class="t" style="left:218px;top:88px;letter-spacing:-0.25px">Géométrie</div>
<div class="t" style="left:402px;top:88px">Modifier</div>
<div class="t" style="left:550px;top:88px;letter-spacing:-0.4px">Vue</div>
<div class="t" style="left:594px;top:88px">Mesurer</div>
<div class="t" style="left:665px;top:88px;letter-spacing:-0.3px">Créer</div>
<div class="t" style="left:821px;top:88px">Positionnement</div>

<div class="t" style="left:-2px;top:133px;color:#2a2a2a;letter-spacing:-0.28px">r | Placer Meneaux</div>

</body></html>
